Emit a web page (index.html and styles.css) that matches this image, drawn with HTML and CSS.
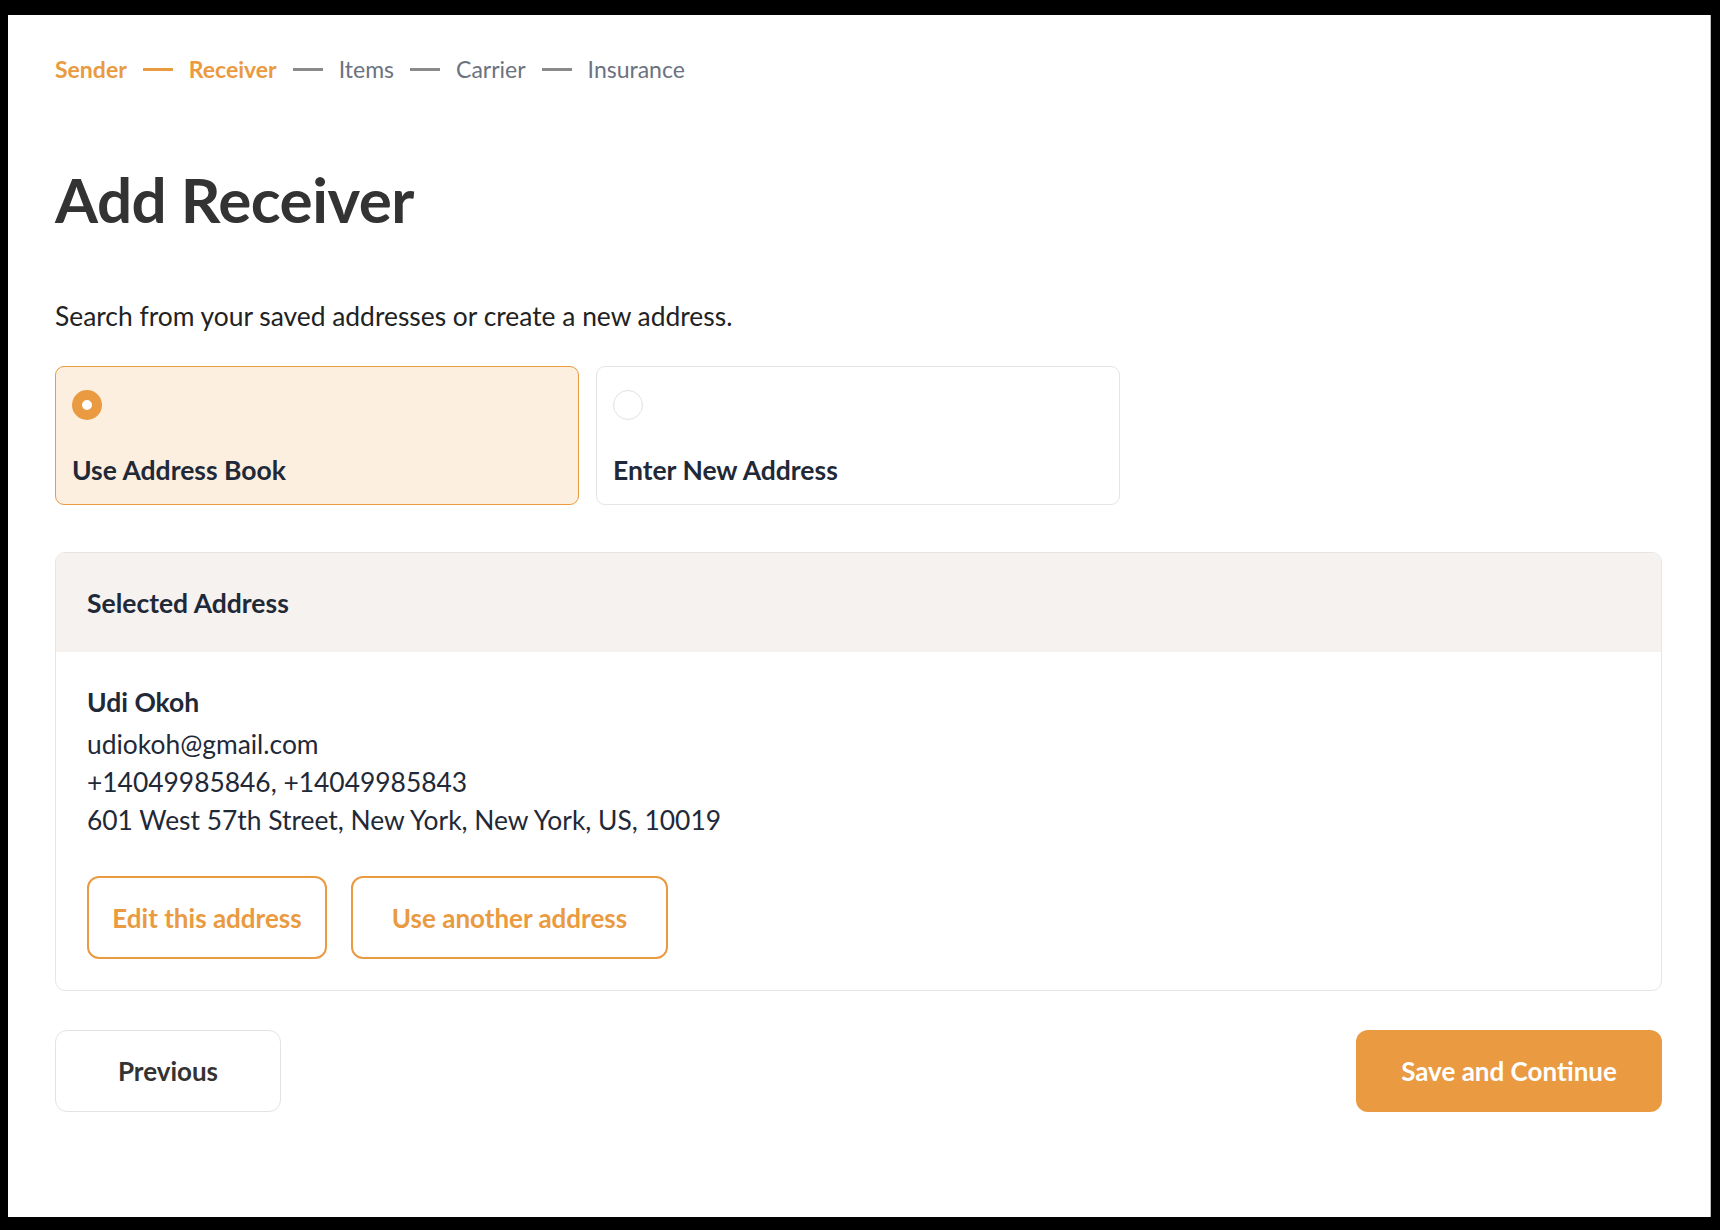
FILE: index.html
```html
<!DOCTYPE html>
<html lang="en">
<head>
    <meta charset="UTF-8">
    <meta name="viewport" content="width=device-width, initial-scale=1.0">
    <title>Add Receiver</title>
    <link rel="stylesheet" href="styles.css">
</head>
<body>
    <div class="window">
        <nav class="steps">
            <span class="step done">Sender</span>
            <span class="dash done"></span>
            <span class="step done">Receiver</span>
            <span class="dash"></span>
            <span class="step">Items</span>
            <span class="dash"></span>
            <span class="step">Carrier</span>
            <span class="dash"></span>
            <span class="step">Insurance</span>
        </nav>

        <h1>Add Receiver</h1>
        <p class="intro">Search from your saved addresses or create a new address.</p>

        <div class="choices">
            <label class="choice selected">
                <span class="radio"></span>
                <span class="choice-label">Use Address Book</span>
            </label>
            <label class="choice">
                <span class="radio"></span>
                <span class="choice-label">Enter New Address</span>
            </label>
        </div>

        <div class="panel">
            <div class="panel-head">Selected Address</div>
            <div class="panel-body">
                <div class="name">Udi Okoh</div>
                <div class="line">udiokoh@gmail.com</div>
                <div class="line">+14049985846, +14049985843</div>
                <div class="line">601 West 57th Street, New York, New York, US, 10019</div>
                <div class="panel-actions">
                    <button class="btn-outline btn-edit">Edit this address</button>
                    <button class="btn-outline btn-other">Use another address</button>
                </div>
            </div>
        </div>

        <div class="footer">
            <button class="btn-prev">Previous</button>
            <button class="btn-save">Save and Continue</button>
        </div>
    </div>
</body>
</html>
```

FILE: styles.css
```css
html, body {
    margin: 0;
    background-color: #000;
}
body {
    font-family: Lato, "Open Sans", Arial, sans-serif;
    color: #1f2937;
}
.window {
    margin: 15px 9px 13px 8px;
    height: 1202px;
    box-sizing: border-box;
    background-color: #fff;
    border-right: 1px solid #bbb;
    padding: 39px 48px 0 47px;
}
.steps {
    display: flex;
    align-items: center;
    height: 30px;
    font-size: 23px;
    color: #6b7280;
}
.step.done {
    color: #ea9a40;
    font-weight: 700;
}
.dash {
    width: 30px;
    height: 3px;
    background-color: #8a8a8a;
    margin: 0 16px;
}
.dash.done {
    background-color: #ea9a40;
}
h1 {
    margin: 77px 0 0;
    font-size: 62px;
    line-height: 77px;
    font-weight: 700;
    color: #333;
    letter-spacing: -0.5px;
}
.intro {
    margin: 64px 0 0;
    font-size: 26.4px;
    line-height: 29px;
    color: #222;
}
.choices {
    display: flex;
    gap: 17px;
    margin-top: 35px;
}
.choice {
    width: 524px;
    height: 139px;
    box-sizing: border-box;
    display: flex;
    flex-direction: column;
    justify-content: space-between;
    align-items: flex-start;
    padding: 23px 16px 19px;
    border: 1.5px solid #e5e5e5;
    border-radius: 9px;
    background-color: #fff;
}
.choice.selected {
    background-color: #fcefe0;
    border-color: #ea9a40;
}
.radio {
    width: 30px;
    height: 30px;
    box-sizing: border-box;
    border-radius: 50%;
    border: 1.5px solid #e2e2e2;
    background-color: #fff;
}
.choice.selected .radio {
    border: 10px solid #ea9a40;
}
.choice-label {
    font-size: 26.5px;
    line-height: 29px;
    font-weight: 700;
}
.panel {
    margin-top: 47px;
    border: 1.5px solid #e6e6e6;
    border-radius: 10px;
    overflow: hidden;
}
.panel-head {
    height: 99px;
    display: flex;
    align-items: center;
    padding: 0 31px;
    background-color: #f5f2ef;
    font-size: 26.5px;
    font-weight: 700;
}
.panel-body {
    padding: 31px 31px 31px;
    font-size: 26.4px;
    line-height: 38px;
}
.name {
    font-weight: 700;
    font-size: 26.5px;
    margin-bottom: 4px;
}
.panel-actions {
    display: flex;
    gap: 24px;
    margin-top: 37px;
}
button {
    font-family: inherit;
    font-weight: 700;
    font-size: 26px;
    cursor: pointer;
    border-radius: 12px;
    height: 83px;
    padding: 0;
}
.btn-outline {
    background-color: #fff;
    color: #ea9a40;
    border: 2px solid #ea9a40;
}
.btn-edit {
    width: 240px;
}
.btn-other {
    width: 317px;
}
.footer {
    display: flex;
    justify-content: space-between;
    margin-top: 39px;
}
.btn-prev {
    width: 226px;
    height: 82px;
    background-color: #fff;
    color: #333;
    border: 1.5px solid #e3e3e3;
}
.btn-save {
    width: 306px;
    height: 82px;
    background-color: #ea9a40;
    color: #fff;
    border: none;
}
```
